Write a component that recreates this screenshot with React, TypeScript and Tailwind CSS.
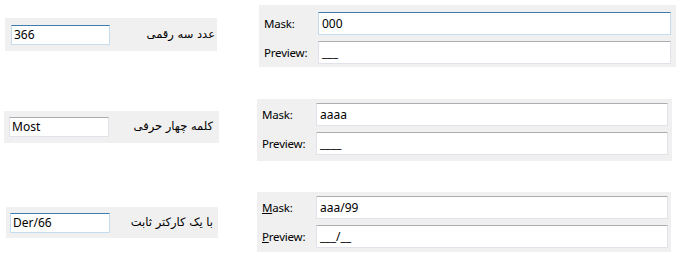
import React from "react";

const latin = { fontFamily: '"Noto Sans", "Liberation Sans", sans-serif' };
const arabic = { fontFamily: '"DejaVu Sans", "Noto Sans", sans-serif' };

function Box({
  value,
  focused,
  className,
}: {
  value: string;
  focused?: boolean;
  className: string;
}) {
  const border = focused
    ? "border border-[#c5dcef] border-t-[#3d7bad]"
    : "border border-[#e2e3ea] border-t-[#abadb3]";
  return (
    <div
      className={`${border} bg-white flex items-center pl-[2px] text-[12px] leading-none text-black ${className}`}
      style={latin}
    >
      {value}
    </div>
  );
}

function LeftPanel({
  text,
  value,
  focused,
  className,
  inputClass,
}: {
  text: string;
  value: string;
  focused?: boolean;
  className: string;
  inputClass: string;
}) {
  return (
    <div className={`bg-[#f0f0f0] flex items-center justify-between ${className}`}>
      <Box value={value} focused={focused} className={inputClass} />
      <div dir="rtl" className="text-[11.5px] text-black leading-none" style={arabic}>
        {text}
      </div>
    </div>
  );
}

function RightPanel({
  mask,
  preview,
  focused,
  underline,
  className,
}: {
  mask: string;
  preview: string;
  focused?: boolean;
  underline?: boolean;
  className: string;
}) {
  return (
    <div className={`bg-[#f0f0f0] flex flex-col gap-[6px] ${className}`}>
      <div className="flex items-center">
        <div className="w-[54px] text-[11.5px] tracking-[-0.2px] text-black" style={latin}>
          {underline ? (
            <>
              <span className="underline">M</span>ask:
            </>
          ) : (
            "Mask:"
          )}
        </div>
        <Box value={mask} focused={focused} className="flex-1 h-[23px] pl-[3px]" />
      </div>
      <div className="flex items-center">
        <div className="w-[54px] text-[11.5px] tracking-[-0.2px] text-black" style={latin}>
          {underline ? (
            <>
              <span className="underline">P</span>review:
            </>
          ) : (
            "Preview:"
          )}
        </div>
        <Box value={preview} className="flex-1 h-[23px] pl-[3px]" />
      </div>
    </div>
  );
}

export default function App() {
  return (
    <div className="w-[684px] h-[259px] bg-white overflow-hidden">
      <div className="h-[90px] flex items-start">
        <LeftPanel
          text="عدد سه رقمی"
          value="366"
          focused
          className="mt-[18px] ml-[5px] w-[212px] h-[33px] pl-[6px] pr-[2px]"
          inputClass="w-[99px] h-[20px]"
        />
        <RightPanel
          mask="000"
          preview="___"
          focused
          className="mt-[5px] ml-[42px] w-[417px] h-[62px] pt-[7px] pl-[5px] pr-[5px]"
        />
      </div>
      <div className="h-[95px] flex items-start">
        <LeftPanel
          text="كلمه چهار حرفی"
          value="Most"
          className="mt-[21px] ml-[4px] w-[215px] h-[32px] pl-[5px] pr-[6px]"
          inputClass="w-[100px] h-[20px]"
        />
        <RightPanel
          mask="aaaa"
          preview="____"
          className="mt-[9px] ml-[38px] w-[415px] h-[62px] pt-[4px] pl-[5px] pr-[4px]"
        />
      </div>
      <div className="h-[74px] flex items-start">
        <LeftPanel
          text="با یک کارکتر ثابت"
          value="Der/66"
          focused
          className="mt-[22px] ml-[6px] w-[212px] h-[31px] pl-[4px] pr-[5px]"
          inputClass="w-[100px] h-[20px]"
        />
        <RightPanel
          mask="aaa/99"
          preview="___/__"
          underline
          className="mt-[7px] ml-[39px] w-[414px] h-[60px] pt-[4px] pl-[5px] pr-[3px]"
        />
      </div>
    </div>
  );
}
